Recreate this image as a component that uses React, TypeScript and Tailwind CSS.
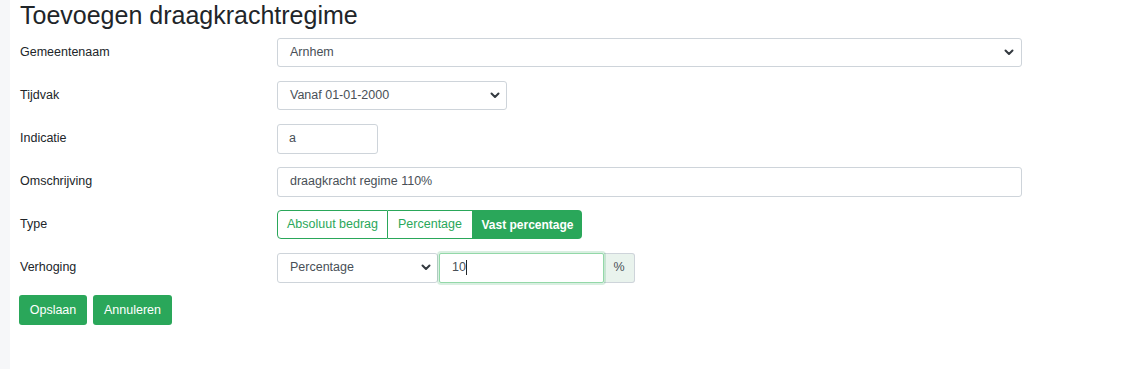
import React from "react";

const Chevron = () => (
  <svg width="10" height="7" viewBox="0 0 10 7" className="shrink-0">
    <polyline points="1.5,1.5 5,5 8.5,1.5" fill="none" stroke="#343a40" strokeWidth="2" strokeLinecap="round" strokeLinejoin="round" />
  </svg>
);

const Row = ({ label, children }: { label: string; children: React.ReactNode }) => (
  <div className="flex items-center h-[29px]">
    <div className="w-[257px] shrink-0 text-[12.5px] text-[#212529]">{label}</div>
    {children}
  </div>
);

const Select = ({ value, w }: { value: string; w: string }) => (
  <div className={`${w} h-[29px] flex items-center justify-between border border-[#ced4da] rounded-[3px] bg-white pl-[12px] pr-[6px] text-[12.5px] text-[#495057]`}>
    <span>{value}</span>
    <Chevron />
  </div>
);

export default function App() {
  return (
    <div className="flex min-h-screen bg-white font-['Liberation_Sans',Arial,sans-serif]">
      <div className="w-[10px] shrink-0 bg-[#f6f7f9]" />
      <div className="pl-[10px] flex flex-col">
        <h1 className="h-[38px] text-[25px] leading-[30px] text-[#212529] font-normal">Toevoegen draagkrachtregime</h1>
        <div className="flex flex-col gap-[14px]">
          <Row label="Gemeentenaam">
            <div className="flex">
              <div className="w-[745px] h-[29px] flex items-center justify-between border border-[#ced4da] rounded-[3px] bg-white pl-[12px] pr-[7px] text-[12.5px] text-[#495057]">
                <span>Arnhem</span>
                <Chevron />
              </div>
            </div>
          </Row>
          <Row label="Tijdvak">
            <Select value="Vanaf 01-01-2000" w="w-[230px]" />
          </Row>
          <Row label="Indicatie">
            <div className="w-[101px] h-[30px] flex items-center border border-[#ced4da] rounded-[3px] bg-white pl-[11px] text-[12.5px] text-[#495057]">a</div>
          </Row>
          <Row label="Omschrijving">
            <div className="w-[745px] h-[30px] flex items-center border border-[#ced4da] rounded-[3px] bg-white pl-[12px] text-[12.5px] text-[#495057]">draagkracht regime 110%</div>
          </Row>
          <Row label="Type">
            <div className="flex h-[29px] text-[12.5px]">
              <div className="w-[111px] flex items-center justify-center border border-[#2aa75a] rounded-l-[4px] text-[#2aa75a]">Absoluut bedrag</div>
              <div className="w-[85px] flex items-center justify-center border-y border-r border-[#2aa75a] text-[#2aa75a]">Percentage</div>
              <div className="w-[109px] flex items-center justify-center bg-[#2aa75a] rounded-r-[4px] text-white font-bold text-[12px]">Vast percentage</div>
            </div>
          </Row>
          <Row label="Verhoging">
            <div className="flex h-[30px]">
              <Select value="Percentage" w="w-[161px] !h-[30px]" />
              <div className="relative z-10 ml-[1px] w-[165px] h-[30px] flex items-center border border-[#93d8a8] rounded-[2px] bg-white pl-[12px] text-[12.5px] text-[#495057] shadow-[0_0_0_2px_rgba(42,167,90,0.18)]">
                <span>10</span>
                <span className="inline-block w-[1px] h-[15px] bg-[#212529]" />
              </div>
              <div className="w-[31px] h-[30px] flex items-center justify-center border border-l-0 border-[#ced4da] rounded-r-[3px] bg-[#e9f3ed] text-[12.5px] text-[#495057]">%</div>
            </div>
          </Row>
          <div className="flex gap-[6px] -mt-px -ml-px">
            <button className="w-[68px] h-[30px] rounded-[3px] bg-[#2aa75a] text-white text-[12.5px]">Opslaan</button>
            <button className="w-[79px] h-[30px] rounded-[3px] bg-[#2aa75a] text-white text-[12.5px]">Annuleren</button>
          </div>
        </div>
      </div>
    </div>
  );
}
